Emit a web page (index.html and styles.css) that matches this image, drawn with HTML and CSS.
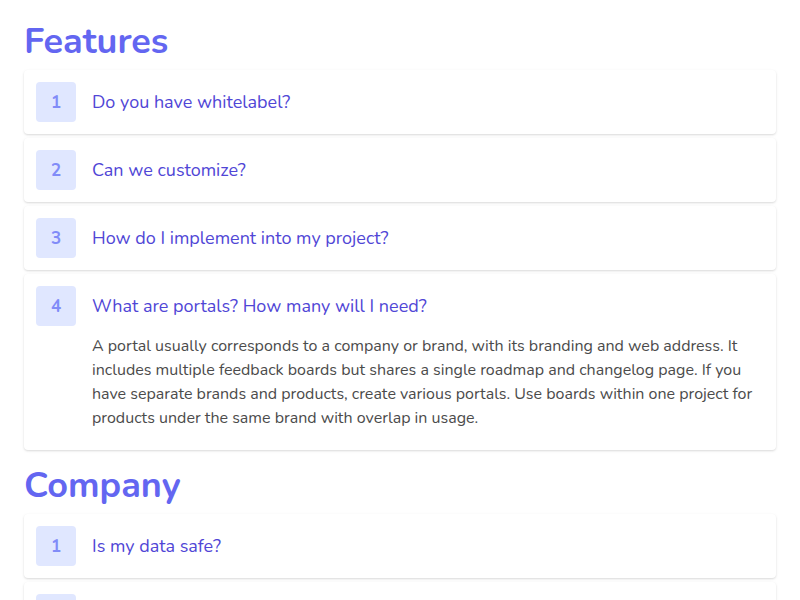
FILE: index.html
```html
<!DOCTYPE html>
<html lang="en">
<head>
<meta charset="utf-8">
<title>FAQ</title>
<link rel="stylesheet" href="styles.css">
</head>
<body>
<main class="faq">
  <section class="group">
    <h2 class="group-title">Features</h2>
    <div class="list">
      <div class="item">
        <div class="row"><span class="num">1</span><span class="q">Do you have whitelabel?</span></div>
      </div>
      <div class="item">
        <div class="row"><span class="num">2</span><span class="q">Can we customize?</span></div>
      </div>
      <div class="item">
        <div class="row"><span class="num">3</span><span class="q">How do I implement into my project?</span></div>
      </div>
      <div class="item open">
        <div class="row"><span class="num">4</span><span class="q">What are portals? How many will I need?</span></div>
        <p class="a">A portal usually corresponds to a company or brand, with its branding and web address. It includes multiple feedback boards but shares a single roadmap and changelog page. If you have separate brands and products, create various portals. Use boards within one project for products under the same brand with overlap in usage.</p>
      </div>
    </div>
  </section>
  <section class="group">
    <h2 class="group-title">Company</h2>
    <div class="list">
      <div class="item">
        <div class="row"><span class="num">1</span><span class="q">Is my data safe?</span></div>
      </div>
      <div class="item">
        <div class="row"><span class="num">2</span><span class="q">Where is my data stored?</span></div>
      </div>
    </div>
  </section>
</main>
</body>
</html>
```

FILE: styles.css
```css
html, body {
  margin: 0;
  padding: 0;
  background: #ffffff;
}
body {
  font-family: "Nunito", "Lato", "Open Sans", sans-serif;
}
.faq {
  padding: 0 24px;
}
.group {
  padding-top: 22px;
}
.group + .group {
  padding-top: 16px;
}
.group-title {
  margin: 0 0 8px;
  font-size: 36px;
  line-height: 40px;
  font-weight: 700;
  color: #6366f1;
}
.list {
  display: flex;
  flex-direction: column;
  gap: 4px;
}
.item {
  background: #ffffff;
  border-radius: 4px;
  padding: 12px;
  box-shadow: 0 1px 3px rgba(0, 0, 0, 0.1), 0 1px 2px rgba(0, 0, 0, 0.06);
}
.row {
  display: flex;
  align-items: center;
  gap: 16px;
}
.num {
  flex: none;
  width: 40px;
  height: 40px;
  border-radius: 4px;
  background: #e0e7ff;
  color: #818cf8;
  font-weight: 700;
  font-size: 17px;
  display: flex;
  align-items: center;
  justify-content: center;
}
.q {
  font-size: 18px;
  color: #5046d6;
}
.a {
  margin: 0;
  padding: 8px 0 8px 56px;
  font-size: 16px;
  line-height: 24px;
  color: #4b4b4b;
}
```
